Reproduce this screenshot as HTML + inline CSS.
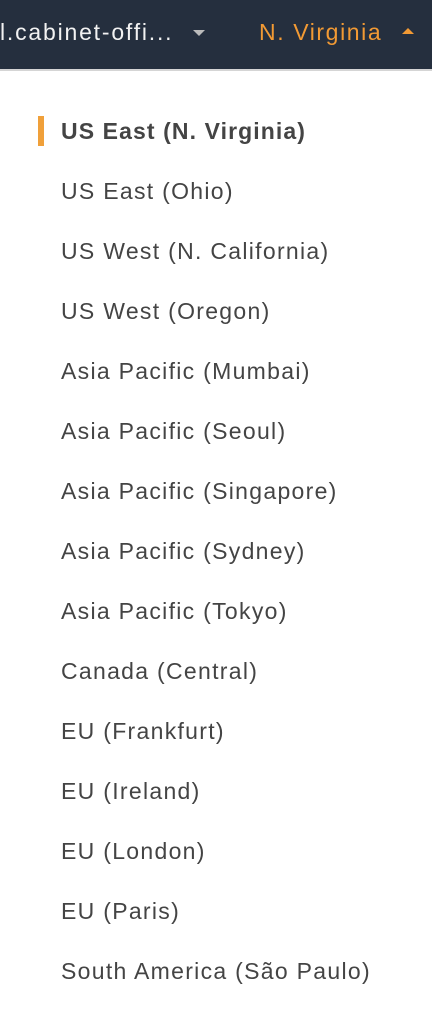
<!DOCTYPE html>
<html><head><style>
body{margin:0;width:432px;height:1028px;background:#fff;font-family:"Liberation Sans",Arial,sans-serif;overflow:hidden;position:relative}
.hdr{position:absolute;left:0;top:0;width:432px;height:69px;background:#252f3e;border-bottom:2px solid #d5d5d5}
.t{position:absolute;top:17px;font-size:23px;line-height:30px;white-space:nowrap;letter-spacing:1.6px}
.tri{position:absolute;width:0;height:0;border-left:6px solid transparent;border-right:6px solid transparent}
.it{position:absolute;left:61px;font-size:23px;color:#444;line-height:30px;white-space:nowrap;letter-spacing:1.3px}
.bar{position:absolute;left:38px;top:116px;width:6px;height:30px;background:#f0a03a}
</style></head><body>
<div class="hdr">
<div class="t" style="left:0;color:#f2f2f2;letter-spacing:1.8px">l.cabinet-offi...</div>
<div class="tri" style="left:193px;top:30px;border-top:6px solid #bbb"></div>
<div class="t" style="left:259px;color:#f29a34">N. Virginia</div>
<div class="tri" style="left:402px;top:28px;border-bottom:6px solid #f29a34"></div>
</div>
<div class="bar"></div>
<div class="it" style="top:116px;font-weight:bold;letter-spacing:1.1px">US East (N. Virginia)</div>
<div class="it" style="top:176px">US East (Ohio)</div>
<div class="it" style="top:236px">US West (N. California)</div>
<div class="it" style="top:296px">US West (Oregon)</div>
<div class="it" style="top:356px">Asia Pacific (Mumbai)</div>
<div class="it" style="top:416px">Asia Pacific (Seoul)</div>
<div class="it" style="top:476px">Asia Pacific (Singapore)</div>
<div class="it" style="top:536px">Asia Pacific (Sydney)</div>
<div class="it" style="top:596px">Asia Pacific (Tokyo)</div>
<div class="it" style="top:656px">Canada (Central)</div>
<div class="it" style="top:716px">EU (Frankfurt)</div>
<div class="it" style="top:776px">EU (Ireland)</div>
<div class="it" style="top:836px">EU (London)</div>
<div class="it" style="top:896px">EU (Paris)</div>
<div class="it" style="top:956px">South America (São Paulo)</div>
</body></html>
